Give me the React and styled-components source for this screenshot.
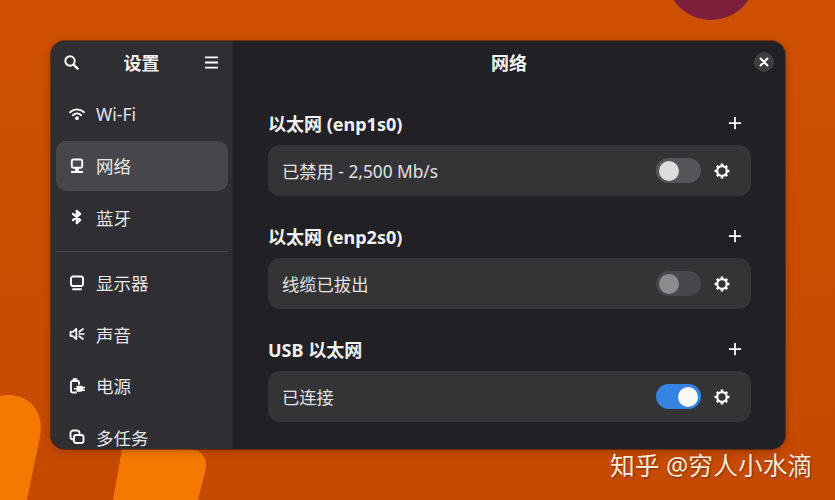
import React from 'react';
import styled, { createGlobalStyle } from 'styled-components';

const GlobalStyle = createGlobalStyle`
  html, body {
    margin: 0;
    padding: 0;
    background: #c94c00;
  }
  body {
    font-family: "Noto Sans", "Noto Sans CJK SC", sans-serif;
  }
`;

//---------------------------------------------------------------------
// icons

const Svg = ({ size = 16, children }) => (
  <svg width={size} height={size} viewBox="0 0 16 16" fill="none" stroke="currentColor" strokeWidth="1.9" strokeLinecap="round" strokeLinejoin="round">
    {children}
  </svg>
);

const SearchIcon = () => (
  <Svg>
    <circle cx="6.4" cy="6.4" r="5" strokeWidth="2.1" />
    <path d="M10.3 10.3l4.2 4.2" strokeWidth="2.4" />
  </Svg>
);

const MenuIcon = () => (
  <Svg>
    <path d="M1 2.5h14M1 8h14M1 13.5h14" strokeLinecap="butt" strokeWidth="2" />
  </Svg>
);

const WifiIcon = () => (
  <Svg>
    <path d="M1 6.2C5 2.4 11 2.4 15 6.2" />
    <path d="M3.9 9.2C6.3 7 9.7 7 12.1 9.2" />
    <circle cx="8" cy="12.2" r="1.9" fill="currentColor" stroke="none" />
  </Svg>
);

const NetworkIcon = () => (
  <Svg>
    <rect x="2.8" y="1.5" width="10.4" height="8.2" rx="1.5" />
    <path d="M2 14h12" strokeWidth="2" strokeLinecap="butt" />
    <rect x="6" y="10" width="4" height="5" fill="currentColor" stroke="none" />
  </Svg>
);

const BluetoothIcon = () => (
  <Svg>
    <path d="M4 4.8L11.2 11l-3.4 3.2V1.8L11.2 5 4 11.2" strokeWidth="2.2" />
  </Svg>
);

const DisplayIcon = () => (
  <Svg>
    <rect x="2" y="1.5" width="12" height="9.5" rx="2" />
    <path d="M4 14.2h8" />
  </Svg>
);

const SoundIcon = () => (
  <Svg>
    <path d="M1.5 5.8v4.4h2.4l3.4 3V2.8L3.9 5.8z" strokeWidth="1.8" />
    <path d="M10.2 8h4.6M10.2 5.8l3.8-2.8M10.2 10.2l3.8 2.8" strokeWidth="1.7" />
  </Svg>
);

const PowerIcon = () => (
  <Svg>
    <path d="M7 14.5H3.5A1.5 1.5 0 0 1 2 13V4.5A1.5 1.5 0 0 1 3.5 3h5A1.5 1.5 0 0 1 10 4.5V6" strokeWidth="1.8" />
    <path d="M4.5 1.2h3" strokeWidth="1.8" />
    <path d="M7.5 7.8h4a3 3 0 0 1 0 6h-4z" fill="currentColor" stroke="none" />
    <path d="M13.5 9.4h2.2M13.5 12.2h2.2M5.6 10.8h2" strokeWidth="1.5" />
  </Svg>
);

const MultitaskIcon = () => (
  <Svg>
    <path d="M4 10.5A2.5 2.5 0 0 1 1.5 8V4A2.5 2.5 0 0 1 4 1.5h4A2.5 2.5 0 0 1 10.5 4" />
    <rect x="5" y="6" width="9.5" height="8" rx="2.2" />
  </Svg>
);

const PlusIcon = () => (
  <Svg>
    <path d="M8 1v14M1 8h14" strokeWidth="2" strokeLinecap="butt" />
  </Svg>
);

const CloseIcon = () => (
  <Svg size={10}>
    <path d="M2.5 2.5l11 11M13.5 2.5l-11 11" strokeWidth="3.2" />
  </Svg>
);

const GearIcon = () => (
  <Svg>
    <circle cx="8" cy="8" r="4.8" strokeWidth="2.2" />
    <path
      d="M8 .6v2.2M8 13.2v2.2M.6 8h2.2M13.2 8h2.2M2.8 2.8l1.5 1.5M11.7 11.7l1.5 1.5M13.2 2.8l-1.5 1.5M4.3 11.7l-1.5 1.5"
      strokeWidth="2.6"
      strokeLinecap="butt"
    />
  </Svg>
);

//---------------------------------------------------------------------

const navTop = [
  { label: 'Wi-Fi', icon: <WifiIcon /> },
  { label: '网络', icon: <NetworkIcon />, active: true },
  { label: '蓝牙', icon: <BluetoothIcon /> },
];

const navBottom = [
  { label: '显示器', icon: <DisplayIcon /> },
  { label: '声音', icon: <SoundIcon /> },
  { label: '电源', icon: <PowerIcon /> },
  { label: '多任务', icon: <MultitaskIcon /> },
];

const groups = [
  { title: '以太网 (enp1s0)', status: '已禁用 - 2,500 Mb/s' },
  { title: '以太网 (enp2s0)', status: '线缆已拔出', dimmed: true },
  { title: 'USB 以太网', status: '已连接', on: true },
];

const NavRow = ({ item }) => (
  <NavItem $active={item.active}>
    <NavIcon>{item.icon}</NavIcon>
    {item.label}
  </NavItem>
);

const App = () => (
  <Page>
    <GlobalStyle />
    <Wallpaper width="835" height="500" viewBox="0 0 835 500">
      <circle cx="711" cy="-25" r="45" fill="#7c1f3a" />
      <path d="M0 396C28 390 45 412 40 436L27 500H0z" fill="#f57900" />
      <path d="M122 449H190C203 449 208 460 205 472L198 500H113z" fill="#f57900" />
    </Wallpaper>

    <Window>
      <Sidebar>
        <SideHeader>
          <HeaderIcon><SearchIcon /></HeaderIcon>
          <SideTitle>设置</SideTitle>
          <HeaderIcon><MenuIcon /></HeaderIcon>
        </SideHeader>
        <NavList>
          {navTop.map(item => <NavRow key={item.label} item={item} />)}
        </NavList>
        <Separator />
        <NavList>
          {navBottom.map(item => <NavRow key={item.label} item={item} />)}
        </NavList>
      </Sidebar>

      <Content>
        <ContentHeader>
          网络
          <CloseButton><CloseIcon /></CloseButton>
        </ContentHeader>
        <Groups>
          {groups.map(group => (
            <Group key={group.title}>
              <GroupHead>
                <GroupTitle>{group.title}</GroupTitle>
                <PlusButton><PlusIcon /></PlusButton>
              </GroupHead>
              <Card>
                <Status>{group.status}</Status>
                <Toggle $on={group.on} $dimmed={group.dimmed}><Knob $on={group.on} $dimmed={group.dimmed} /></Toggle>
                <GearButton><GearIcon /></GearButton>
              </Card>
            </Group>
          ))}
        </Groups>
      </Content>
    </Window>

    <Watermark>知乎 @穷人小水滴</Watermark>
  </Page>
);

export default App;

//---------------------------------------------------------------------

const Page = styled.div`
  position: relative;
  box-sizing: border-box;
  width: 835px;
  height: 500px;
  padding: 41px 50px 51px 51px;
  overflow: hidden;
  background: linear-gradient(180deg, #cf5000 0%, #c54a00 100%);
`;

const Wallpaper = styled.svg`
  position: absolute;
  top: 0;
  left: 0;
`;

const Window = styled.div`
  position: relative;
  display: flex;
  height: 408px;
  border-radius: 14px;
  overflow: hidden;
  background: #212125;
  box-shadow: 0 0 0 1px rgba(30, 20, 20, 0.45), 0 2px 8px rgba(60, 20, 0, 0.35);
`;

const Sidebar = styled.div`
  flex: 0 0 182px;
  box-sizing: border-box;
  padding: 0 4px 0 5px;
  background: #2e2e33;
  border-right: 1px solid #27272b;
  color: #f2f2f2;
`;

const SideHeader = styled.div`
  display: flex;
  align-items: center;
  justify-content: space-between;
  height: 44px;
  margin-bottom: 4.5px;
  padding: 0 9px 0 8px;
`;

const HeaderIcon = styled.div`
  display: flex;
  width: 15px;
  height: 15px;
  margin-top: -2px;
  color: #fff;
  svg {
    width: 15px;
    height: 15px;
  }
`;

const SideTitle = styled.div`
  font-size: 18px;
  font-weight: 700;
  margin-top: -3px;
`;

const NavList = styled.div`
  display: flex;
  flex-direction: column;
  gap: 1.5px;
`;

const NavItem = styled.div`
  display: flex;
  align-items: center;
  box-sizing: border-box;
  height: 50px;
  padding: 0 0 1px 13px;
  border-radius: 10px;
  font-size: 17.5px;
  color: #e6e6e6;
  background: ${props => (props.$active ? '#46464b' : 'transparent')};
`;

const NavIcon = styled.span`
  display: flex;
  width: 16px;
  height: 16px;
  margin-right: 11px;
  color: #fff;
`;

const Separator = styled.div`
  height: 1px;
  margin: 8.5px 0 6px;
  background: #44444a;
`;

const Content = styled.div`
  flex: 1;
  min-width: 0;
  color: #f2f2f2;
`;

const ContentHeader = styled.div`
  position: relative;
  display: flex;
  align-items: center;
  justify-content: center;
  box-sizing: border-box;
  height: 44px;
  padding-bottom: 2px;
  font-size: 18px;
  font-weight: 700;
`;

const CloseButton = styled.div`
  position: absolute;
  top: 11px;
  right: 11px;
  display: flex;
  align-items: center;
  justify-content: center;
  width: 20px;
  height: 20px;
  border-radius: 50%;
  background: #3d3d42;
  color: #fff;
`;

const Groups = styled.div`
  display: flex;
  flex-direction: column;
  gap: 26px;
  padding: 24px 34px 0 35px;
`;

const Group = styled.div`
  display: flex;
  flex-direction: column;
`;

const GroupHead = styled.div`
  display: flex;
  align-items: center;
  justify-content: space-between;
  height: 28px;
  margin-bottom: 8px;
`;

const GroupTitle = styled.div`
  font-size: 18px;
  font-weight: 700;
  color: #f2f2f2;
`;

const PlusButton = styled.div`
  display: flex;
  width: 14px;
  height: 14px;
  margin-right: 9px;
  color: #fff;
  svg {
    width: 14px;
    height: 14px;
  }
`;

const Card = styled.div`
  display: flex;
  align-items: center;
  height: 51px;
  padding: 0 21px 0 14px;
  border-radius: 12px;
  background: #343436;
`;

const Status = styled.div`
  flex: 1;
  font-size: 17.3px;
  color: #e2e2e2;
`;

const Toggle = styled.div`
  display: flex;
  align-items: center;
  justify-content: ${props => (props.$on ? 'flex-end' : 'flex-start')};
  box-sizing: border-box;
  width: 45px;
  height: 25px;
  padding: 0 3px;
  border-radius: 13px;
  background: ${props => {
    if (props.$on) return '#3584e4';
    return props.$dimmed ? '#48484c' : '#55555a';
  }};
`;

const Knob = styled.div`
  width: 20px;
  height: 20px;
  border-radius: 50%;
  background: ${props => {
    if (props.$on) return '#fafafa';
    return props.$dimmed ? '#8c8c8f' : '#dcdcdc';
  }};
`;

const GearButton = styled.div`
  display: flex;
  margin-left: 13px;
  color: #fff;
`;

const Watermark = styled.div`
  position: absolute;
  left: 610px;
  top: 448px;
  font-family: "Noto Sans", "Noto Sans CJK SC", sans-serif;
  font-size: 24.8px;
  line-height: 34px;
  color: #f6e7d8;
  text-shadow: 1px 1px 2px rgba(90, 40, 0, 0.75);
  white-space: nowrap;
`;
